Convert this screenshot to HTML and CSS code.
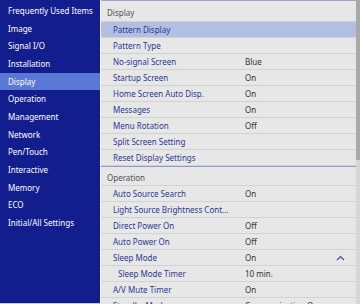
FILE: index.html
```html
<html>

<head>
    <meta charset="utf-8">
    <title>Projector menu</title>
    <link rel="stylesheet" href="styles.css">
</head>

<body>
    <div class="menu">
        <nav class="side">
            <div class="side-item">Frequently Used Items</div>
            <div class="side-item">Image</div>
            <div class="side-item">Signal I/O</div>
            <div class="side-item">Installation</div>
            <div class="side-item selected">Display</div>
            <div class="side-item">Operation</div>
            <div class="side-item">Management</div>
            <div class="side-item">Network</div>
            <div class="side-item">Pen/Touch</div>
            <div class="side-item">Interactive</div>
            <div class="side-item">Memory</div>
            <div class="side-item">ECO</div>
            <div class="side-item">Initial/All Settings</div>
        </nav>
        <div class="main">
            <div class="list">
                <div class="group-title first">Display</div>
                <div class="row active"><span class="label">Pattern Display</span></div>
                <div class="row"><span class="label">Pattern Type</span></div>
                <div class="row"><span class="label">No-signal Screen</span><span class="value">Blue</span></div>
                <div class="row"><span class="label">Startup Screen</span><span class="value">On</span></div>
                <div class="row"><span class="label">Home Screen Auto Disp.</span><span class="value">On</span></div>
                <div class="row"><span class="label">Messages</span><span class="value">On</span></div>
                <div class="row"><span class="label">Menu Rotation</span><span class="value">Off</span></div>
                <div class="row"><span class="label">Split Screen Setting</span></div>
                <div class="row"><span class="label">Reset Display Settings</span></div>
                <div class="group-title">Operation</div>
                <div class="row"><span class="label">Auto Source Search</span><span class="value">On</span></div>
                <div class="row"><span class="label">Light Source Brightness Cont...</span></div>
                <div class="row"><span class="label">Direct Power On</span><span class="value">Off</span></div>
                <div class="row"><span class="label">Auto Power On</span><span class="value">Off</span></div>
                <div class="row">
                    <span class="label">Sleep Mode</span><span class="value">On</span>
                    <svg class="chevron" width="9" height="6" viewBox="0 0 9 6">
                        <path d="M1 5 L4.5 1.5 L8 5" fill="none" stroke="#3a4aa8" stroke-width="1.2" />
                    </svg>
                </div>
                <div class="row sub"><span class="label">Sleep Mode Timer</span><span class="value">10 min.</span></div>
                <div class="row"><span class="label">A/V Mute Timer</span><span class="value">On</span></div>
                <div class="row"><span class="label">Standby Mode</span><span class="value">Communication On</span></div>
            </div>
            <div class="scrollbar">
                <div class="thumb"></div>
            </div>
        </div>
    </div>
</body>

</html>
```

FILE: styles.css
```css
* {
    margin: 0;
    padding: 0;
    box-sizing: border-box;
}

body {
    width: 360px;
    height: 304px;
    overflow: hidden;
    background: #e7e7e7;
    font-family: "Noto Sans", "Open Sans", sans-serif;
    font-size: 8px;
}

.menu {
    display: flex;
    height: 304px;
}

.side {
    width: 100px;
    flex: none;
    background: #121e8e;
    padding-top: 2px;
    border-bottom: 1px solid #c8cbe0;
}

.side-item {
    height: 17.67px;
    line-height: 17.67px;
    padding-left: 8px;
    color: #ffffff;
    white-space: nowrap;
}

.side-item.selected {
    background: #5a78d6;
}

.main {
    flex: 1;
    display: flex;
    border-left: 1px solid #f4f4f4;
    overflow: hidden;
}

.list {
    flex: 1;
    background: #e7e7e7;
    overflow: hidden;
}

.group-title {
    height: 20px;
    padding: 2px 0 0 6px;
    display: flex;
    align-items: center;
    color: #505050;
    border-bottom: 1px solid #d2d2d2;
    border-top: 1px solid #8f98cf;
}

.group-title.first {
    height: 22px;
    border-top: 1px solid #9aa2d6;
}

.row {
    height: 16px;
    display: grid;
    grid-template-columns: 132px 1fr 20px;
    align-items: center;
    padding-left: 12px;
    border-bottom: 1px solid #d2d2d2;
    white-space: nowrap;
}

.row.active {
    background: #b3bfe2;
}

.row.sub .label {
    padding-left: 5px;
}

.label {
    color: #2a3893;
    overflow: hidden;
}

.value {
    color: #333333;
}

.chevron {
    display: block;
}

.scrollbar {
    width: 4px;
    flex: none;
    background: #d6d6d6;
}

.thumb {
    height: 160px;
    background: #a9a9a9;
}
```
